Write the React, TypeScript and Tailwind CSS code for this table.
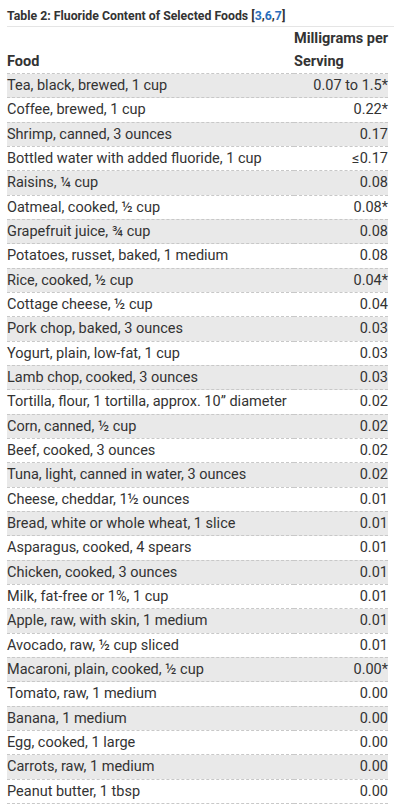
import React from "react";

const rows: [string, string][] = [
  ["Tea, black, brewed, 1 cup", "0.07 to 1.5*"],
  ["Coffee, brewed, 1 cup", "0.22*"],
  ["Shrimp, canned, 3 ounces", "0.17"],
  ["Bottled water with added fluoride, 1 cup", "≤0.17"],
  ["Raisins, ¼ cup", "0.08"],
  ["Oatmeal, cooked, ½ cup", "0.08*"],
  ["Grapefruit juice, ¾ cup", "0.08"],
  ["Potatoes, russet, baked, 1 medium", "0.08"],
  ["Rice, cooked, ½ cup", "0.04*"],
  ["Cottage cheese, ½ cup", "0.04"],
  ["Pork chop, baked, 3 ounces", "0.03"],
  ["Yogurt, plain, low-fat, 1 cup", "0.03"],
  ["Lamb chop, cooked, 3 ounces", "0.03"],
  ["Tortilla, flour, 1 tortilla, approx. 10” diameter", "0.02"],
  ["Corn, canned, ½ cup", "0.02"],
  ["Beef, cooked, 3 ounces", "0.02"],
  ["Tuna, light, canned in water, 3 ounces", "0.02"],
  ["Cheese, cheddar, 1½ ounces", "0.01"],
  ["Bread, white or whole wheat, 1 slice", "0.01"],
  ["Asparagus, cooked, 4 spears", "0.01"],
  ["Chicken, cooked, 3 ounces", "0.01"],
  ["Milk, fat-free or 1%, 1 cup", "0.01"],
  ["Apple, raw, with skin, 1 medium", "0.01"],
  ["Avocado, raw, ½ cup sliced", "0.01"],
  ["Macaroni, plain, cooked, ½ cup", "0.00*"],
  ["Tomato, raw, 1 medium", "0.00"],
  ["Banana, 1 medium", "0.00"],
  ["Egg, cooked, 1 large", "0.00"],
  ["Carrots, raw, 1 medium", "0.00"],
  ["Peanut butter, 1 tbsp", "0.00"],
];

export default function App() {
  return (
    <div className="bg-white px-[7px] pt-[9px] text-[#333333]" style={{ fontFamily: "Roboto, 'Liberation Sans', sans-serif" }}>
      {/* Caption */}
      <div className="border-b border-[#e5e5e5] pb-[2px] text-[12.3px] font-bold leading-[15px]">
        Table 2: Fluoride Content of Selected Foods [
        <span className="text-[#2a6ebb]">3</span>,<span className="text-[#2a6ebb]">6</span>,
        <span className="text-[#2a6ebb]">7</span>]
      </div>

      <table className="w-[381px] table-fixed border-collapse text-[14.5px]">
        <thead>
          <tr>
            <th className="w-[287px] p-0 text-left align-bottom font-bold leading-[23px]">Food</th>
            <th className="w-[94px] whitespace-nowrap p-0 text-left align-bottom font-bold leading-[23px]">
              Milligrams per
              <br />
              Serving
            </th>
          </tr>
        </thead>
        <tbody>
          {rows.map(([food, mg], i) => (
            <tr key={food} className={i % 2 === 0 ? "bg-[#e9e9e9]" : "bg-white"}>
              <td className="whitespace-nowrap border-y border-dashed border-[#c8c8c8] leading-[23.33px]">{food}</td>
              <td className="whitespace-nowrap border-y border-dashed border-[#c8c8c8] text-right leading-[23.33px]">{mg}</td>
            </tr>
          ))}
        </tbody>
      </table>
    </div>
  );
}
